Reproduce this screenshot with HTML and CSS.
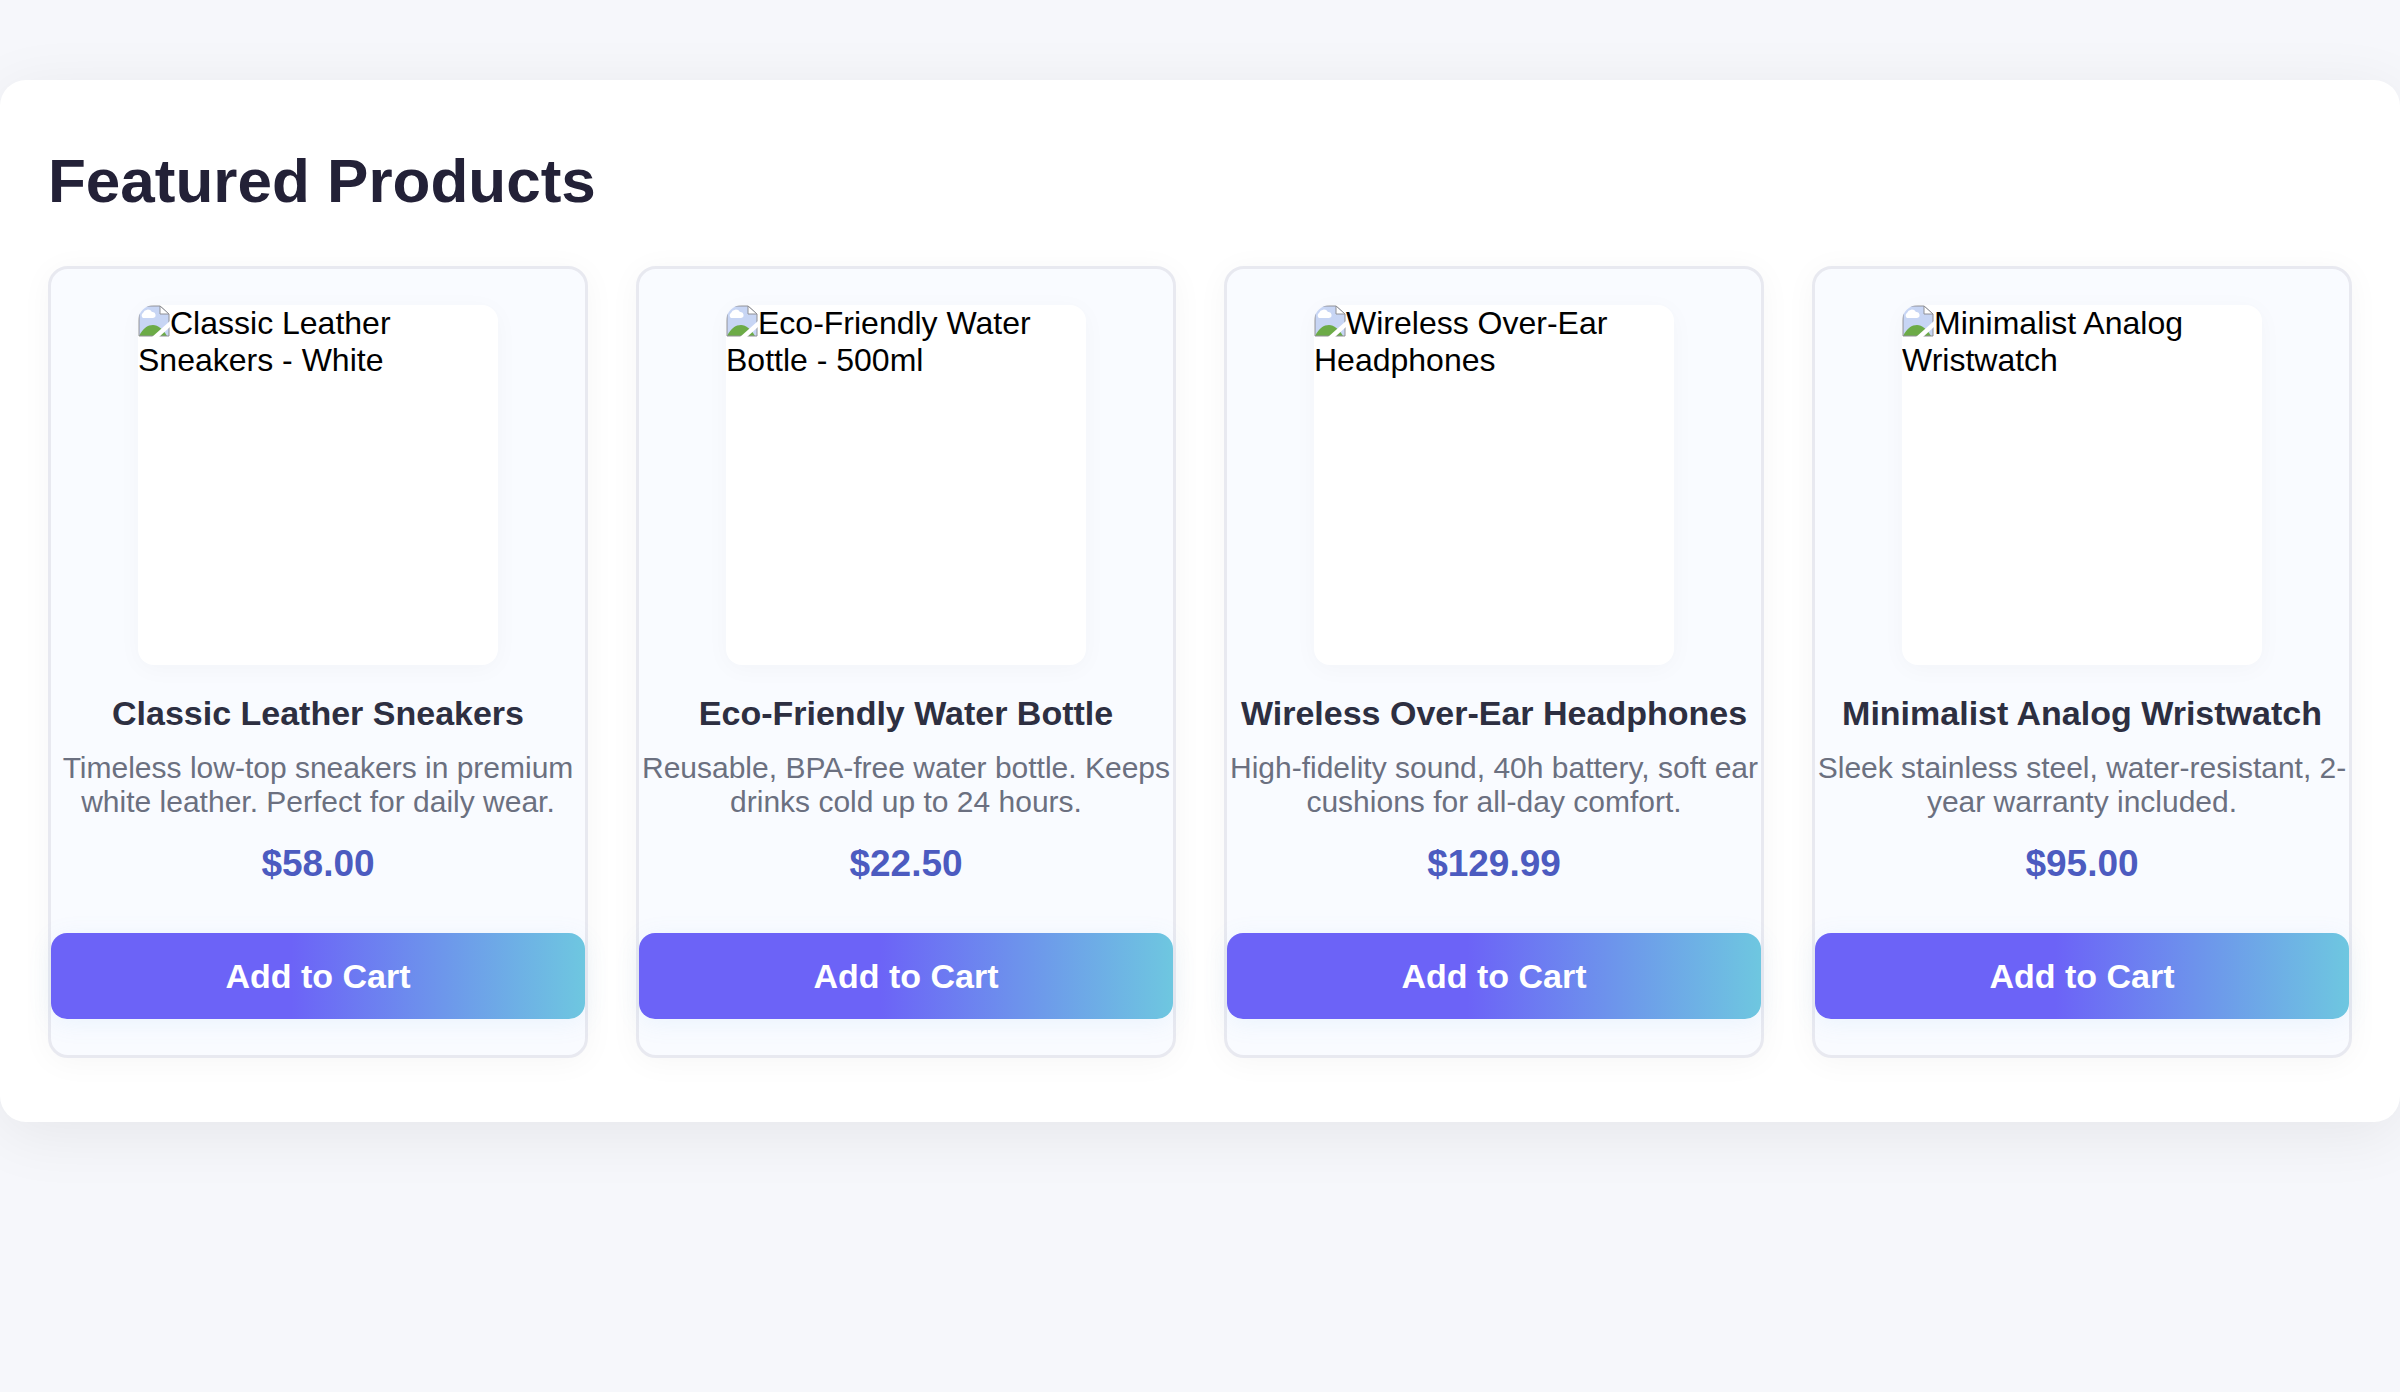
FILE: index.html
```html
<!DOCTYPE html>
<html lang="en">
<head>
<meta charset="utf-8">
<meta name="viewport" content="width=device-width, initial-scale=1">
<title>Featured Products</title>
<link rel="stylesheet" href="styles.css">
</head>
<body>
<svg class="sprite" aria-hidden="true">
  <symbol id="missing" viewBox="0 0 32 32">
    <path d="M1 1H22L31 10V31H1Z" fill="#c7d5f4"/>
    <path d="M5 13a3 3 0 0 1 0-5 5 5 0 0 1 9-1 3 3 0 0 1 1 6Z" fill="#fff"/>
    <path d="M1 31C5 23 10 20 15 20S25 24 29 31Z" fill="#6cab47"/>
    <path d="M1 0V31H31V9L22 1H0" fill="none" stroke="#8f9096" stroke-width="1"/>
    <path d="M22 1V9H31Z" fill="#fff" stroke="#8f9096" stroke-width="1"/>
    <path d="M14 32L32 16V22L21 32Z" fill="#fff"/>
  </symbol>
</svg>
<main class="catalog">
  <h1 class="catalog-title">Featured Products</h1>
  <div class="grid">
    <article class="card">
      <div class="photo"><svg class="photo-icon" aria-hidden="true"><use href="#missing"/></svg>Classic Leather Sneakers - White</div>
      <h2 class="name">Classic Leather Sneakers</h2>
      <p class="desc">Timeless low-top sneakers in premium white leather. Perfect for daily wear.</p>
      <p class="price">$58.00</p>
      <button class="add" type="button">Add to Cart</button>
    </article>
    <article class="card">
      <div class="photo"><svg class="photo-icon" aria-hidden="true"><use href="#missing"/></svg>Eco-Friendly Water Bottle - 500ml</div>
      <h2 class="name">Eco-Friendly Water Bottle</h2>
      <p class="desc">Reusable, BPA-free water bottle. Keeps drinks cold up to 24 hours.</p>
      <p class="price">$22.50</p>
      <button class="add" type="button">Add to Cart</button>
    </article>
    <article class="card">
      <div class="photo"><svg class="photo-icon" aria-hidden="true"><use href="#missing"/></svg>Wireless Over-Ear Headphones</div>
      <h2 class="name">Wireless Over-Ear Headphones</h2>
      <p class="desc">High-fidelity sound, 40h battery, soft ear cushions for all-day comfort.</p>
      <p class="price">$129.99</p>
      <button class="add" type="button">Add to Cart</button>
    </article>
    <article class="card">
      <div class="photo"><svg class="photo-icon" aria-hidden="true"><use href="#missing"/></svg>Minimalist Analog Wristwatch</div>
      <h2 class="name">Minimalist Analog Wristwatch</h2>
      <p class="desc">Sleek stainless steel, water-resistant, 2-year warranty included.</p>
      <p class="price">$95.00</p>
      <button class="add" type="button">Add to Cart</button>
    </article>
  </div>
</main>
</body>
</html>
```
FILE: styles.css
```css
* {
  box-sizing: border-box;
}

body {
  margin: 0;
  background: #f6f7fb;
  color: #000;
  font-family: "Liberation Sans", Arial, sans-serif;
  font-size: 32px;
}

.sprite {
  display: none;
}

.catalog {
  margin: 80px 0;
  padding: 64px 48px;
  background: #fff;
  border-radius: 26px;
  box-shadow: 0 12px 64px rgba(0, 0, 0, 0.07);
}

.catalog-title {
  margin: 0 0 48px;
  color: #232137;
  font-size: 62px;
  line-height: 74px;
}

.grid {
  display: grid;
  grid-template-columns: repeat(auto-fit, minmax(440px, 1fr));
  gap: 48px;
}

.card {
  display: flex;
  flex-direction: column;
  align-items: center;
  padding: 36px 0;
  background: #f9fbff;
  border: 3px solid #e8e9f0;
  border-radius: 20px;
  box-shadow: 0 4px 32px rgba(0, 0, 0, 0.04);
  text-align: center;
}

.photo {
  width: 360px;
  max-width: 100%;
  height: 360px;
  overflow: hidden;
  background: #fff;
  border-radius: 16px;
  box-shadow: 0 4px 24px rgba(0, 0, 0, 0.03);
  line-height: 37px;
  text-align: left;
}

.photo-icon {
  width: 32px;
  height: 32px;
  vertical-align: top;
}

.name {
  margin: 28px 0 18px;
  color: #2d2f41;
  font-size: 34px;
  line-height: 40px;
}

.desc {
  margin: 0 0 24px;
  color: #6b7080;
  font-size: 30px;
  line-height: 34px;
}

.price {
  margin: 0 0 48px;
  color: #4c5bc0;
  font-size: 37px;
  font-weight: 700;
  line-height: 42px;
}

.add {
  width: 100%;
  margin-top: auto;
  padding: 24px 0;
  border: 0;
  border-radius: 16px;
  background: linear-gradient(90deg, #6c63f7 45%, #6ec7e0 100%);
  box-shadow: 0 4px 24px rgba(108, 180, 240, 0.1);
  color: #fff;
  font: 700 34px/38px "Liberation Sans", Arial, sans-serif;
  cursor: pointer;
}
```
